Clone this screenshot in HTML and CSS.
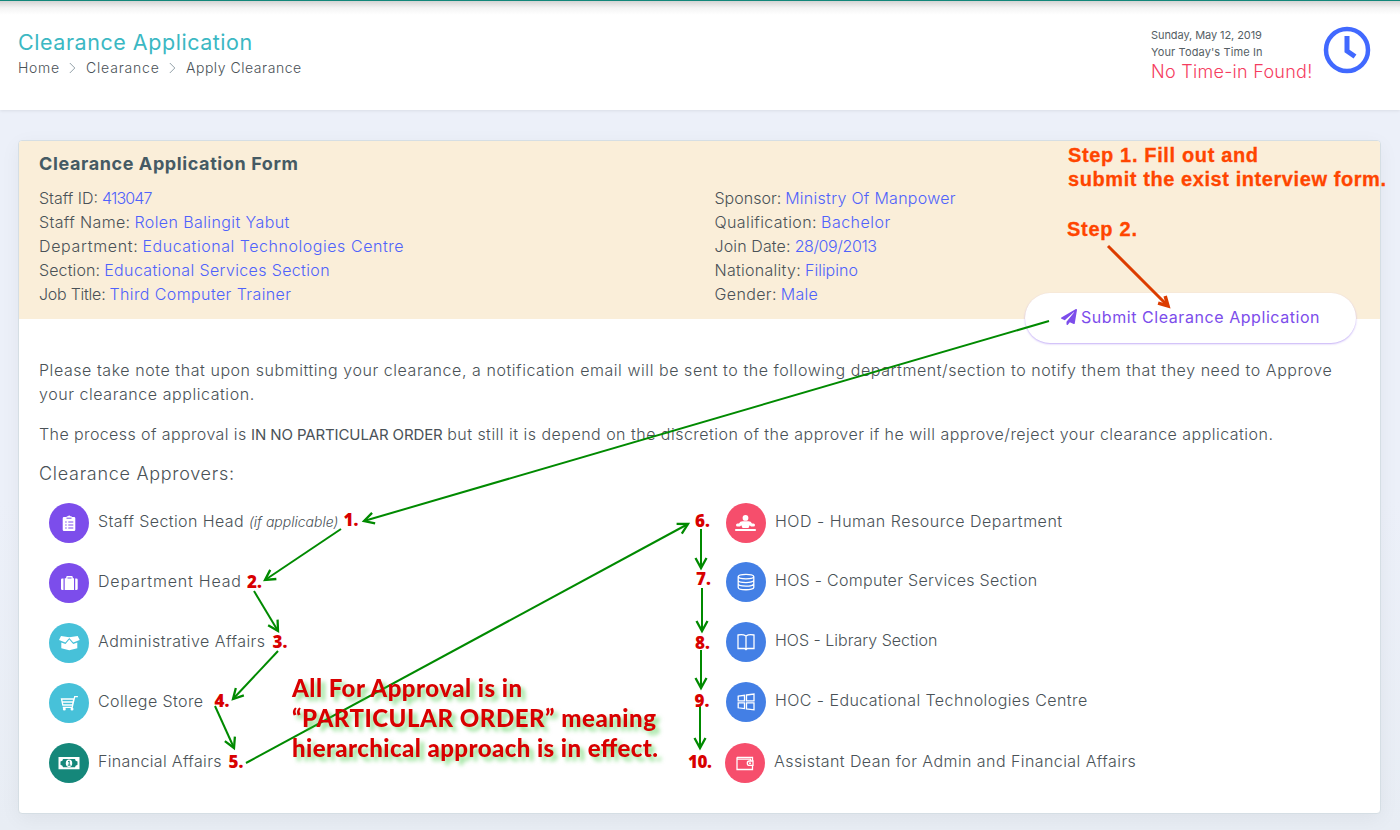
FILE: index.html
```html
<!DOCTYPE html>
<html lang="en">
<head>
<meta charset="utf-8">
<title>Clearance Application</title>
<link rel="stylesheet" href="styles.css">
</head>
<body>
<header class="topbar">
  <div class="heading">
    <h1 class="t50">Clearance Application</h1>
    <nav class="crumbs">
      <span class="t65">Home</span>
      <svg width="7" height="12" viewBox="0 0 7 12"><path d="M.8 1l5 5-5 5"/></svg>
      <span class="t80">Clearance</span>
      <svg width="7" height="12" viewBox="0 0 7 12"><path d="M.8 1l5 5-5 5"/></svg>
      <span class="t55">Apply Clearance</span>
    </nav>
  </div>
  <div class="timein">
    <div class="timein-text">
      <small class="n10">Sunday, May 12, 2019</small>
      <small class="t10">Your Today's Time In</small>
      <strong class="t25">No Time-in Found!</strong>
    </div>
    <svg class="clock" width="48" height="48" viewBox="0 0 48 48"><circle cx="24" cy="24" r="21"/><path d="M24 10v15l8 5.500"/></svg>
  </div>
</header>
<main class="card">
  <section class="banner">
    <h2 class="t60">Clearance Application Form</h2>
    <div class="facts">
      <dl>
        <div><dt>Staff ID:</dt><dd class="n85">413047</dd></div>
        <div><dt class="t35">Staff Name:</dt><dd class="t40">Rolen Balingit Yabut</dd></div>
        <div><dt class="t65">Department:</dt><dd class="t55">Educational Technologies Centre</dd></div>
        <div><dt class="t10">Section:</dt><dd class="t35">Educational Services Section</dd></div>
        <div><dt class="n20">Job Title:</dt><dd class="t40">Third Computer Trainer</dd></div>
      </dl>
      <dl>
        <div><dt>Sponsor:</dt><dd class="t25">Ministry Of Manpower</dd></div>
        <div><dt class="t40">Qualification:</dt><dd class="t45">Bachelor</dd></div>
        <div><dt class="t10">Join Date:</dt><dd class="n40">28/09/2013</dd></div>
        <div><dt class="t25">Nationality:</dt><dd>Filipino</dd></div>
        <div><dt class="t35">Gender:</dt><dd class="t25">Male</dd></div>
      </dl>
    </div>
    <button class="submit" type="button"><svg width="16" height="16" viewBox="0 0 512 512"><path d="M476 3.200L12.500 270.600c-18.100 10.400-15.800 35.600 2.200 43.200L121 358.400l287.300-253.200c5.500-4.900 13.300 2.600 8.600 8.300L176 407v80.500c0 23.600 28.500 32.900 42.500 15.800L282 426l124.600 52.200c14.200 6 30.400-2.900 33-18.200l72-432C515 7.800 493.300-6.800 476 3.200z"/></svg><span class="t58">Submit Clearance Application</span></button>
  </section>
  <section class="content">
    <p class="t56">Please take note that upon submitting your clearance, a notification email will be sent to the following department/section to notify them that they need to Approve<br>your clearance application.</p>
    <p><span class="t40">The process of approval is</span> <b>IN NO PARTICULAR ORDER</b> <span class="t48">but still it is depend on the discretion of the approver if he will approve/reject your clearance application.</span></p>
    <h3 class="t70">Clearance Approvers:</h3>
    <div class="approvers">
      <ul>
        <li>
          <svg class="badge violet" viewBox="0 0 40 40"><path d="M15 14h2.700v-.7H19a1.300 1.300 0 0 1 2.400 0h1.300v.7H25q1.300 0 1.300 1.300v11.400Q26.300 28 25 28H15q-1.300 0-1.300-1.300V15.300Q13.700 14 15 14z"/><path class="cut" d="M17.500 15.200h5M16.200 19h1.500m1.600 0h5M16.200 22h1.500m1.600 0h5M16.200 25h1.500m1.600 0h5"/></svg>
          <span class="t42">Staff Section Head</span><i>(if applicable)</i>
        </li>
        <li>
          <svg class="badge violet" viewBox="0 0 40 40"><path d="M13.300 15.500h1.200V27h-1.200Q12 27 12 25.800v-9q0-1.300 1.300-1.300zM15.700 15.300h1.500v-1q0-1.300 1.300-1.300h4q1.300 0 1.300 1.300v1H25V27h-9.300zM26.200 15.500h1.200q1.300 0 1.300 1.300v9q0 1.200-1.300 1.200h-1.200z"/><path class="cut" d="M18.500 15h4"/></svg>
          <span class="t80">Department Head</span>
        </li>
        <li>
          <svg class="badge cyan" viewBox="0 0 40 40"><path d="M12 13l8.300 1.200 8.400-1.200 2 4-6.400 2.400-4-4.500-4 4.500L10 17zM12.300 19.600l4.200 1.300 3.800-4.300 3.900 4.300 4.100-1.300v5.600l-8 2.100-8-2.100z"/></svg>
          <span class="t47">Administrative Affairs</span>
        </li>
        <li>
          <svg class="badge cyan" viewBox="0 0 40 40"><path class="line" d="M12.500 16h12.300l-1.300 6h-9.700zM13.300 19h11M28.900 13.700h-3.200l-2.500 10.600h-9.400"/><circle cx="15.300" cy="26" r="1.500"/><circle cx="23" cy="26" r="1.500"/></svg>
          <span class="t40">College Store</span>
        </li>
        <li>
          <svg class="badge green" viewBox="0 0 40 40"><path fill-rule="evenodd" d="M9.500 14h21v12.300h-21zM14 16q0 2-2.500 2.500v3.300Q14 22.300 14 24.300h12q0-2 2.500-2.500v-3.300Q26 18 26 16z"/><ellipse cx="20" cy="20.200" rx="3.200" ry="3.700"/><path class="cut" d="M19 18.800l1.200-.8v4M18.800 22.200h2.800"/></svg>
          <span class="t32">Financial Affairs</span>
        </li>
      </ul>
      <ul>
        <li>
          <svg class="badge rose" viewBox="0 0 40 40"><circle cx="19.500" cy="14.900" r="2.900"/><path d="M16.500 18.300h6q2.500 0 3.500 2.200h1.500q1.500 0 1.500 1.500T27.500 23.500H25l-1.300-1.200L22.500 25h-6l-1.200-2.700-1.300 1.200h-2.500Q10 23.500 10 22t1.500-1.500H13q1-2.200 3.500-2.200zM9.200 26h20.600v2H9.200z"/></svg>
          <span class="t52">HOD - Human Resource Department</span>
        </li>
        <li class="up">
          <svg class="badge blue" viewBox="0 0 40 40"><path class="line" d="M12.200 14.600c0-3.100 15.600-3.100 15.600 0s-15.600 3.100-15.600 0v10.800c0 3.100 15.600 3.100 15.600 0V14.600M12.200 18.200c0 3.100 15.600 3.100 15.600 0M12.200 21.800c0 3.100 15.600 3.100 15.600 0"/></svg>
          <span class="t30">HOS - Computer Services Section</span>
        </li>
        <li class="up">
          <svg class="badge blue" viewBox="0 0 40 40"><path class="line" d="M20 14q-3-2-8-1v13.500h6.500L20 27.600l1.500-1.100H28V13q-5-1-8 1zV27"/></svg>
          <span>HOS - Library Section</span>
        </li>
        <li class="up">
          <svg class="badge blue" viewBox="0 0 40 40"><path class="line" d="M12.200 14.200l6.300-.9v5.500h-6.300zM20.500 13l7.500-.9v6.700h-7.500zM12.200 20.900h6.300v5.700l-6.300-.8zM20.500 20.900H28v6.900l-7.500-.9z"/></svg>
          <span class="t43">HOC - Educational Technologies Centre</span>
        </li>
        <li class="back">
          <svg class="badge rose" viewBox="0 0 40 40"><path class="line" d="M12 14.300h15.500V18M12 14.300v12.200h15.500v-4M12 16.200h13.500V18M28 18h-3.500q-2.200 0-2.200 2.200t2.200 2.200H28z"/><circle cx="25" cy="20.200" r="1"/></svg>
          <span class="t43">Assistant Dean for Admin and Financial Affairs</span>
        </li>
      </ul>
    </div>
  </section>
</main>
<svg class="notes" width="1400" height="830" viewBox="0 0 1400 830">
  <defs>
    <marker id="tip" markerUnits="userSpaceOnUse" markerWidth="16" markerHeight="16" refX="12" refY="8" orient="auto"><path d="M2 2.500L12 8 2 13.500" fill="none" stroke="#008a00" stroke-width="2.300"/></marker>
    <marker id="tip-red" markerUnits="userSpaceOnUse" markerWidth="16" markerHeight="16" refX="12" refY="8" orient="auto"><path d="M3 3L12 8l-9 5" fill="none" stroke="#dc3c00" stroke-width="3.500"/></marker>
  </defs>
  <g class="flow">
    <path d="M1049 321L364 521"/>
    <path d="M341 529L265 580"/>
    <path d="M254 591L278 631"/>
    <path d="M278 651L233 699"/>
    <path d="M215 706L234 748"/>
    <path d="M246 763L688 524"/>
    <path d="M701 529V568"/>
    <path d="M702 588V631"/>
    <path d="M701 650V688"/>
    <path d="M700 706V748"/>
  </g>
  <path class="pointer" d="M1108 246L1168 306"/>
  <g class="nums">
    <text x="343.500" y="526">1.</text><text x="247" y="587.500">2.</text><text x="272.500" y="647.500">3.</text><text x="214.500" y="706.500">4.</text><text x="228.500" y="767.500">5.</text>
    <text x="695" y="526.500">6.</text><text x="696" y="584.500">7.</text><text x="695" y="648.500">8.</text><text x="694.500" y="706.500">9.</text><text x="688" y="767.500" textLength="24">10.</text>
  </g>
  <g class="remark">
    <text x="292" y="697" textLength="230">All For Approval is in</text>
    <text x="292" y="727" textLength="364">“PARTICULAR ORDER” meaning</text>
    <text x="292" y="757" textLength="366">hierarchical approach is in effect.</text>
  </g>
  <g class="steps">
    <text x="1068" y="162" textLength="190">Step 1. Fill out and</text>
    <text x="1068" y="186" textLength="318">submit the exist interview form.</text>
    <text x="1067" y="236" textLength="70">Step 2.</text>
  </g>
</svg>
</body>
</html>
```
FILE: styles.css
```css
* { box-sizing: border-box; }
body {
  margin: 0;
  height: 830px;
  overflow: hidden;
  font: 300 16px/24px Inter, sans-serif;
  color: #4a5257;
  background: linear-gradient(#ecf0f9 60%, #e8edf4);
}
h1, h2, h3, p, dl, dd, ul { margin: 0; padding: 0; }
ul { list-style: none; }

.n85 { letter-spacing: -.85px; }
.n40 { letter-spacing: -.4px; }
.n20 { letter-spacing: -.25px; }
.n10 { letter-spacing: -.08px; }
.t10 { letter-spacing: .12px; }
.t25 { letter-spacing: .28px; }
.t30 { letter-spacing: .29px; }
.t32 { letter-spacing: .34px; }
.t35 { letter-spacing: .36px; }
.t40 { letter-spacing: .4px; }
.t42 { letter-spacing: .4px; }
.t43 { letter-spacing: .43px; }
.t45 { letter-spacing: .5px; }
.t47 { letter-spacing: .47px; }
.t48 { letter-spacing: .482px; }
.t50 { letter-spacing: .54px; }
.t52 { letter-spacing: .51px; }
.t55 { letter-spacing: .54px; }
.t56 { letter-spacing: .558px; }
.t58 { letter-spacing: .56px; }
.t60 { letter-spacing: .6px; }
.t65 { letter-spacing: .67px; }
.t70 { letter-spacing: .71px; }
.t80 { letter-spacing: .8px; }

.topbar {
  height: 110px;
  background: linear-gradient(#d4d4d4, #f4f4f4 7px, #fff 14px);
  border-top: 1px solid #12877a;
  box-shadow: 0 1px 3px rgba(0, 0, 0, .08);
  display: flex;
  justify-content: space-between;
  padding: 0 29px 0 18px;
  white-space: nowrap;
}
.heading { padding-top: 29px; }
h1 { font-size: 21.500px; font-weight: 400; color: #3bb8c3; line-height: 24px; }
.crumbs { font-size: 14px; line-height: 26px; display: flex; align-items: center; gap: 9.700px; padding-top: 1px; }
.crumbs svg { fill: none; stroke: #93a0a8; }
.timein { display: flex; gap: 11px; padding-top: 25px; }
.timein-text { display: flex; flex-direction: column; align-items: start; width: 161px; padding-top: 1px; }
.clock { fill: none; stroke: #4169ff; stroke-width: 4.500; }
.clock path { stroke-width: 5; }
small { font-size: 11px; line-height: 17px; font-weight: 400; color: #556065; }
strong { font-size: 18px; line-height: 21px; font-weight: 300; color: #f53d5f; }

.card {
  margin: 30px 19px 0 18px;
  height: 674px;
  background: #fff;
  border: 1px solid #d5dee4;
  border-radius: 4px;
  box-shadow: 0 5px 20px rgba(0, 0, 0, .05);
}
.banner {
  position: relative;
  height: 178px;
  padding: 11px 20px 0;
  background: #faeed9;
  border-radius: 3px 3px 0 0;
}
h2 { font-size: 18px; font-weight: 700; color: #455a64; }
.facts { display: grid; grid-template-columns: 675.500px 1fr; margin-top: 10px; }
.facts div { display: flex; gap: 4px; }
dd { color: #4f62fb; }
.submit {
  position: absolute;
  left: 1006px;
  top: 152px;
  width: 331px;
  height: 50px;
  display: flex;
  align-items: center;
  gap: 4px;
  padding: 0 0 2px 36px;
  border: 0;
  border-radius: 25px;
  background: #fff;
  color: #7c4deb;
  font: 400 16px/24px Inter, sans-serif;
  white-space: nowrap;
  box-shadow: 0 1px 2px rgba(124, 77, 235, .45);
}
.submit svg { fill: #7c4deb; }

.content { padding: 39px 20px 0; white-space: nowrap; }
p { margin-bottom: 16px; }
b { font-weight: 400; font-size: 15px; letter-spacing: -.12px; }
h3 { font-size: 18px; font-weight: 300; margin-top: -1px; }
.approvers { display: grid; grid-template-columns: 677px 1fr; padding: 17px 0 0 10px; }
li { display: flex; align-items: start; height: 60px; line-height: 36px; }
li span { margin-left: 9px; }
li i { font-size: 14px; margin-left: 5px; line-height: 37px; }
.up { margin: -1px 0 1px; }
.back { margin-left: -1px; }
.badge { width: 40px; height: 40px; border-radius: 50%; fill: #fff; }
.badge .line { fill: none; stroke: #fff; stroke-width: 1.300; }
.badge .cut { fill: none; stroke-width: 1; }
.violet { background: #7c4deb; }
.violet .cut { stroke: #7c4deb; }
.cyan { background: #47c1d9; }
.green { background: #15877a; }
.green .cut { stroke: #15877a; }
.rose { background: #f64e6c; }
.blue { background: #437fe5; }

.notes { position: absolute; left: 0; top: 0; pointer-events: none; }
.flow path { fill: none; stroke: #008a00; stroke-width: 2; marker-end: url(#tip); }
.pointer { fill: none; stroke: #dc3c00; stroke-width: 3; marker-end: url(#tip-red); }
.nums { font: 800 17px "Open Sans", sans-serif; fill: #d80000; }
.remark { font: 900 24px Lato, sans-serif; fill: #d80000; filter: drop-shadow(4px 4px 2px rgba(60, 200, 60, .6)); }
.steps { font: 700 20px "Liberation Sans", Arial, sans-serif; fill: #ff4500; stroke: #ff4500; stroke-width: .3; }
```
